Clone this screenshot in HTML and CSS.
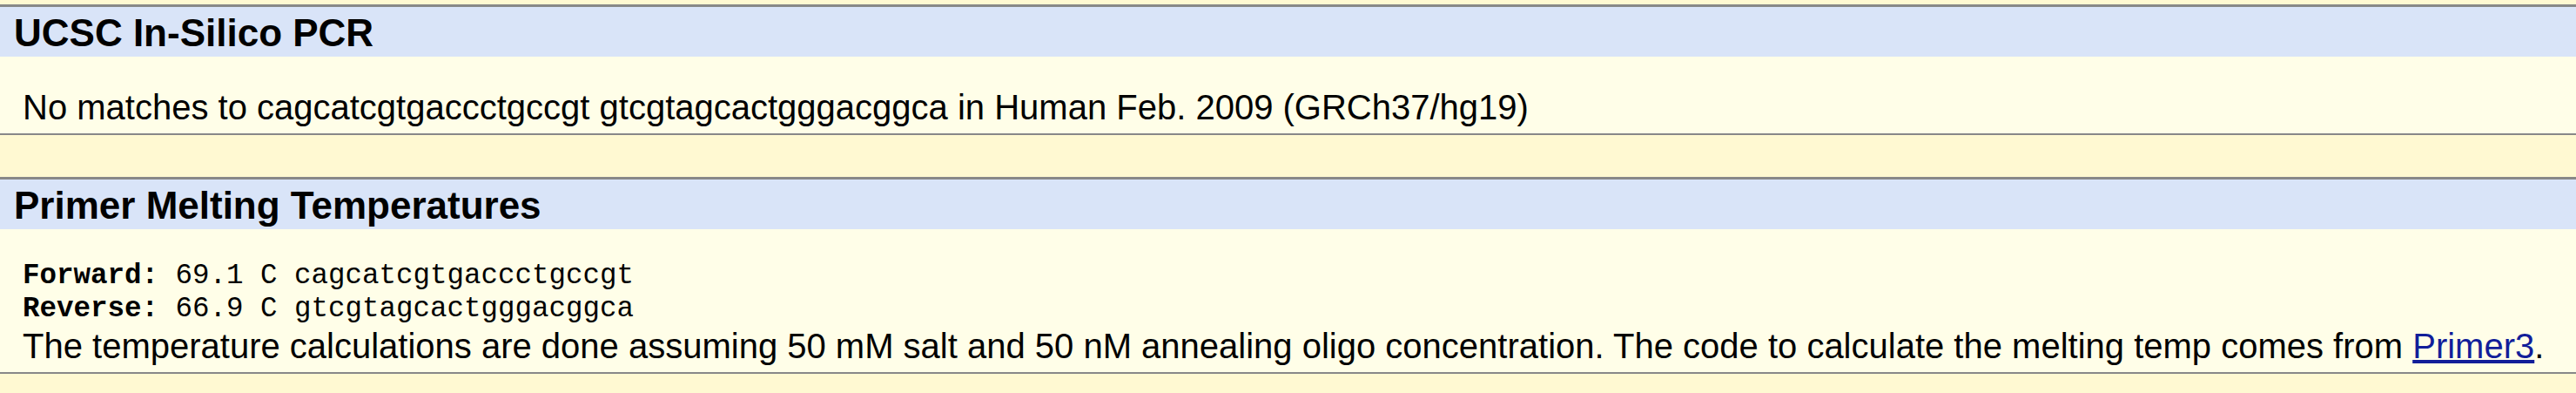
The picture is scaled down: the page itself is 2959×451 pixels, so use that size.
FILE: index.html
```html
<!DOCTYPE html>
<html lang="en">
<head>
<meta charset="utf-8">
<title>UCSC In-Silico PCR</title>
<link rel="stylesheet" href="styles.css">
</head>
<body>
  <section class="panel">
    <h1 class="panel-header">UCSC In-Silico PCR</h1>
    <div class="panel-body">No matches to cagcatcgtgaccctgccgt gtcgtagcactgggacggca in Human Feb. 2009 (GRCh37/hg19)</div>
  </section>
  <section class="panel panel-next">
    <h2 class="panel-header">Primer Melting Temperatures</h2>
    <div class="panel-body">
<pre class="primers"><b>Forward:</b> 69.1 C cagcatcgtgaccctgccgt
<b>Reverse:</b> 66.9 C gtcgtagcactgggacggca</pre>
      The temperature calculations are done assuming 50 mM salt and 50 nM annealing oligo concentration. The code to calculate the melting temp comes from <a class="link" href="#">Primer3</a>.
    </div>
  </section>
</body>
</html>
```
FILE: styles.css
```css
html, body {
  margin: 0;
  background: #fff9d2;
}
body {
  padding-top: 5px;
  font-family: "Liberation Sans", Arial, sans-serif;
  font-size: 40px;
  color: #000;
}
.panel {
  border-top: 3px solid #888888;
  border-bottom: 2px solid #888888;
}
.panel-next {
  margin-top: 48px;
}
.panel-header {
  margin: 0;
  background: #d9e4f8;
  font-size: 44px;
  font-weight: bold;
  line-height: 52px;
  padding: 4px 16px 1px;
}
.panel-body {
  background: #fffee8;
  padding: 35px 26px 7px;
  line-height: 46px;
}
.primers {
  margin: 0;
  font-family: "Liberation Mono", "Courier New", monospace;
  font-size: 32.5px;
  line-height: 38px;
}
.link {
  color: #121e9a;
}
```
